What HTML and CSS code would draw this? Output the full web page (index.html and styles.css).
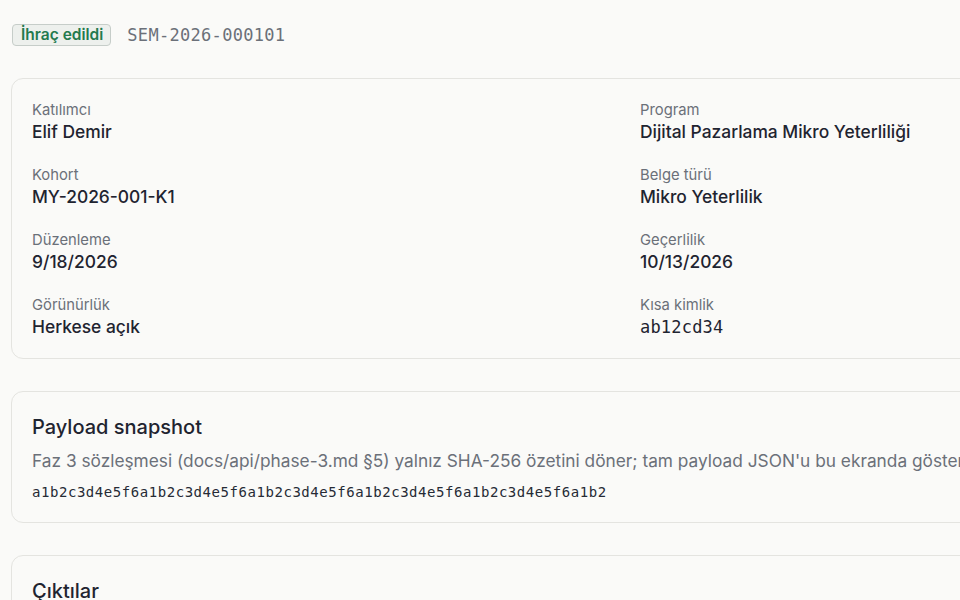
FILE: index.html
```html
<!DOCTYPE html>
<html lang="tr">
<head>
<meta charset="utf-8">
<title>SEM-2026-000101</title>
<link rel="stylesheet" href="styles.css">
</head>
<body>
<main class="page">
  <header class="head">
    <span class="badge">İhraç edildi</span>
    <span class="code">SEM-2026-000101</span>
  </header>

  <section class="card card-info">
    <dl class="info">
      <div class="item"><dt>Katılımcı</dt><dd>Elif Demir</dd></div>
      <div class="item"><dt>Program</dt><dd>Dijital Pazarlama Mikro Yeterliliği</dd></div>
      <div class="item"><dt>Kohort</dt><dd>MY-2026-001-K1</dd></div>
      <div class="item"><dt>Belge türü</dt><dd>Mikro Yeterlilik</dd></div>
      <div class="item"><dt>Düzenleme</dt><dd>9/18/2026</dd></div>
      <div class="item"><dt>Geçerlilik</dt><dd>10/13/2026</dd></div>
      <div class="item"><dt>Görünürlük</dt><dd>Herkese açık</dd></div>
      <div class="item"><dt>Kısa kimlik</dt><dd class="mono">ab12cd34</dd></div>
    </dl>
  </section>

  <section class="card">
    <h2 class="title">Payload snapshot</h2>
    <p class="desc">Faz 3 sözleşmesi (docs/api/phase-3.md §5) yalnız SHA-256 özetini döner; tam payload JSON'u bu ekranda gösterilmez.</p>
    <p class="hash">a1b2c3d4e5f6a1b2c3d4e5f6a1b2c3d4e5f6a1b2c3d4e5f6a1b2c3d4e5f6a1b2</p>
  </section>

  <section class="card">
    <h2 class="title">Çıktılar</h2>
    <p class="desc">Belge çıktıları burada listelenir.</p>
  </section>
</main>
</body>
</html>
```

FILE: styles.css
```css
html, body {
  margin: 0;
  padding: 0;
  background: #fafaf8;
}
body {
  font-family: Inter, "Noto Sans", "Liberation Sans", sans-serif;
  color: #1f2430;
}
.page {
  width: 1242px;
  padding: 24px 0 40px 11px;
  display: flex;
  flex-direction: column;
  gap: 32px;
}
.head {
  display: flex;
  align-items: center;
  gap: 16px;
  height: 22px;
  padding-left: 1px;
}
.badge {
  display: inline-block;
  font-size: 15.5px;
  font-weight: 600;
  line-height: 20px;
  color: #247a4e;
  background: #edf0ed;
  border: 1px solid #c6cdc9;
  border-radius: 4px;
  padding: 0 7px 0 8px;
}
.code {
  font-family: "DejaVu Sans Mono", "Liberation Mono", monospace;
  font-size: 17px;
  letter-spacing: 0.3px;
  color: #6b7079;
}
.card {
  border: 1px solid #e4e4e0;
  border-radius: 12px;
  background: #fafaf8;
  padding: 20px;
}
.card-info {
  padding: 21px 20px 19px;
}
.info {
  margin: 0;
  display: grid;
  grid-template-columns: 592px 592px;
  column-gap: 16px;
  row-gap: 21px;
}
.item dt {
  font-size: 14.8px;
  line-height: 20px;
  color: #6b7079;
}
.item dd {
  margin: 0;
  font-size: 17.4px;
  line-height: 24px;
  font-weight: 500;
  color: #1f2430;
}
.item dd.mono {
  font-family: "DejaVu Sans Mono", "Liberation Mono", monospace;
  font-size: 17px;
  font-weight: 400;
  letter-spacing: 0.2px;
}
.title {
  margin: 0;
  font-size: 20px;
  line-height: 30px;
  font-weight: 500;
  color: #1f2430;
}
.desc {
  margin: 7px 0 0;
  font-size: 17.3px;
  line-height: 24px;
  color: #6b7079;
  white-space: nowrap;
}
.hash {
  margin: 9px 0 0;
  font-family: "DejaVu Sans Mono", "Liberation Mono", monospace;
  font-size: 14px;
  line-height: 20px;
  letter-spacing: 0.55px;
  color: #262b35;
}
```
